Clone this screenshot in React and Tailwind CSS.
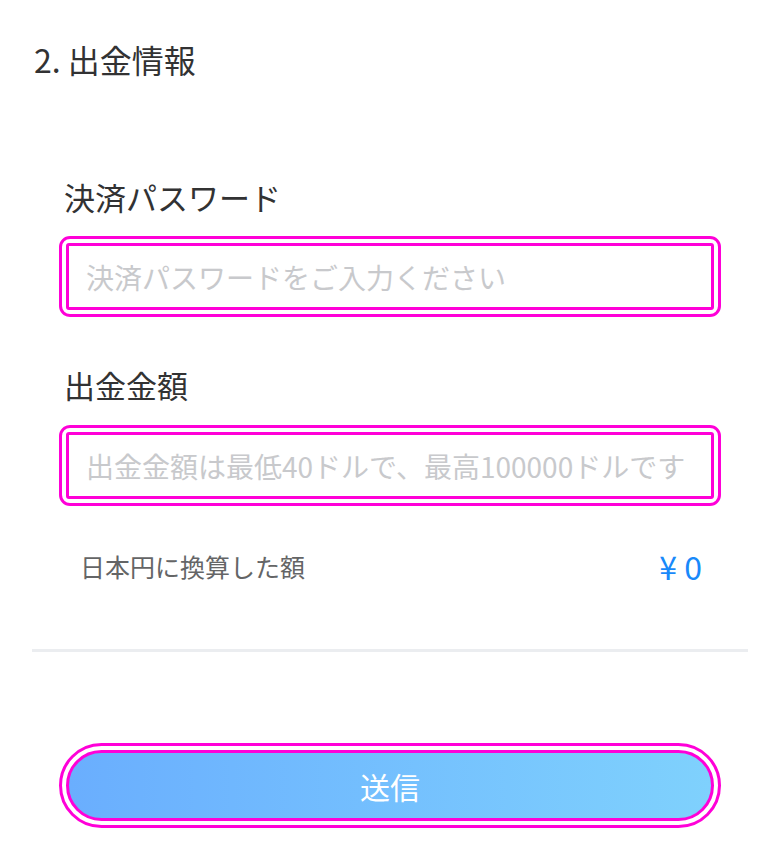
import React from "react";

const FONT = { fontFamily: '"Noto Sans CJK JP", "Noto Sans", sans-serif' };

const Field = ({ label, placeholder, top }) => (
  <div>
    <div className="h-[36px] px-[5px] text-[31px] leading-[36px] text-[#323233]">{label}</div>
    <div className={`${top} rounded-[11px] border-[3px] border-[#ff00d8] p-[4px]`}>
      <input
        type="text"
        placeholder={placeholder}
        className="block h-[67px] w-full rounded-[3px] border-[3px] border-[#ff00d8] bg-white px-[17px] text-[28px] text-[#323233] outline-none placeholder:text-[#c8c9cc]"
        style={FONT}
      />
    </div>
  </div>
);

export default function App() {
  return (
    <div className="min-h-[858px] w-[780px] bg-white" style={FONT}>
      <h2 className="px-[34px] pt-[41px] text-[32px] font-normal leading-[36px] text-[#323233]">2. 出金情報</h2>

      <div className="px-[32px]">
        <div className="px-[27px] pt-[102px]">
          <Field label="決済パスワード" placeholder="決済パスワードをご入力ください" top="mt-[21px]" />
          <div className="h-[50px]" />
          <Field label="出金金額" placeholder="出金金額は最低40ドルで、最高100000ドルです" top="mt-[22px]" />

          <div className="mt-[46px] flex items-center justify-between pl-[21px] pr-[19px]">
            <span className="text-[25px] leading-[28px] text-[#646566]">日本円に換算した額</span>
            <span className="text-[32px] leading-[28px] text-[#1989fa]">¥ 0</span>
          </div>
        </div>

        <div className="mt-[69px] h-[3px] bg-[#ebedf0]" />

        <div className="mt-[91px] px-[27px]">
          <div className="rounded-full border-[3px] border-[#ff00d8] p-[4px]">
            <button className="flex h-[71px] w-full items-center justify-center rounded-full border-[3px] border-[#ff00d8] bg-gradient-to-r from-[#6aaefe] to-[#7fd1fd] pt-[2px] text-[30px] text-white">
              送信
            </button>
          </div>
        </div>
      </div>
    </div>
  );
}
